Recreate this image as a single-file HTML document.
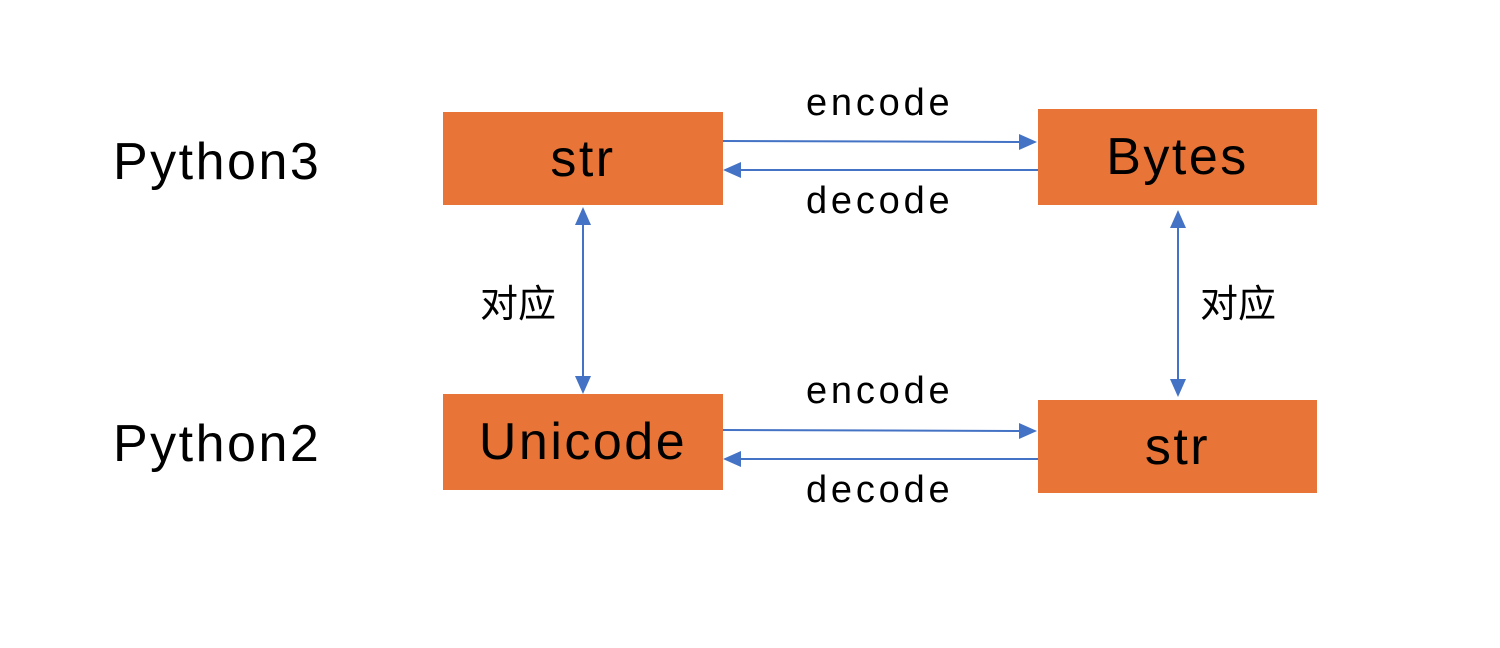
<!DOCTYPE html>
<html><head><meta charset="utf-8"><style>
body{margin:0;width:1500px;height:648px;background:#fff;overflow:hidden;position:relative;font-family:"Liberation Sans","Noto Sans CJK SC",sans-serif;color:#000}
.b{position:absolute;background:#e87437;display:flex;align-items:center;justify-content:center;font-size:52px;letter-spacing:2.5px}
.t{position:absolute;line-height:1;white-space:nowrap}
.e{font-size:38px;letter-spacing:3.8px}
</style></head><body>
<div class="t" style="left:113px;top:136px;font-size:52px;letter-spacing:2.5px">Python3</div>
<div class="t" style="left:113px;top:418px;font-size:52px;letter-spacing:2.5px">Python2</div>
<div class="b" style="left:443px;top:112px;width:280px;height:93px">str</div>
<div class="b" style="left:1038px;top:109px;width:279px;height:96px">Bytes</div>
<div class="b" style="left:443px;top:394px;width:280px;height:96px">Unicode</div>
<div class="b" style="left:1038px;top:400px;width:279px;height:93px">str</div>
<div class="t e" style="left:806px;top:84px">encode</div>
<div class="t e" style="left:806px;top:182px">decode</div>
<div class="t e" style="left:806px;top:372px">encode</div>
<div class="t e" style="left:806px;top:471px">decode</div>
<div class="t" style="left:480px;top:286px;font-size:38px">对应</div>
<div class="t" style="left:1200px;top:286px;font-size:38px">对应</div>
<svg width="1500" height="648" style="position:absolute;left:0;top:0">
<g stroke="#4472c4" stroke-width="2" fill="none">
<line x1="723" y1="141" x2="1022" y2="142"/>
<line x1="738" y1="170" x2="1038" y2="170"/>
<line x1="723" y1="430" x2="1022" y2="431"/>
<line x1="738" y1="459" x2="1038" y2="459"/>
<line x1="583" y1="222" x2="583" y2="378"/>
<line x1="1178" y1="225" x2="1178" y2="382"/>
</g>
<g fill="#4472c4">
<polygon points="1037,142 1019,134 1019,150"/>
<polygon points="723,170 741,162 741,178"/>
<polygon points="1037,431 1019,423 1019,439"/>
<polygon points="723,459 741,451 741,467"/>
<polygon points="583,207 575,225 591,225"/>
<polygon points="583,394 575,376 591,376"/>
<polygon points="1178,210 1170,228 1186,228"/>
<polygon points="1178,397 1170,379 1186,379"/>
</g></svg>
</body></html>
